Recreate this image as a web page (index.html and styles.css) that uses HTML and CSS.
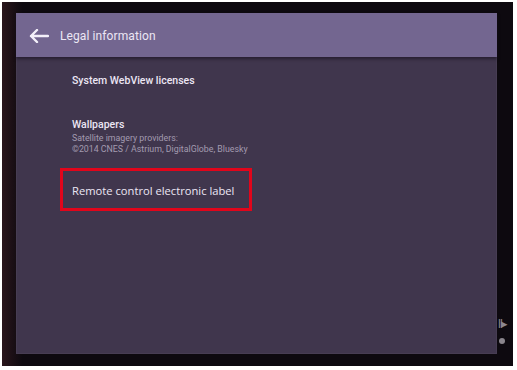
FILE: index.html
```html
<!DOCTYPE html>
<html>
<head>
    <meta charset="UTF-8">
    <title>Legal information</title>
    <link rel="stylesheet" href="styles.css">
</head>
<body>
    <div class="bezel">
        <div class="screen">
            <div class="app-bar">
                <svg class="back" width="20" height="14" viewBox="0 0 20 14">
                    <path d="M19 7H2M8 1L2 7l6 6" fill="none" stroke="#f4f0fa" stroke-width="2.4" stroke-linecap="round" stroke-linejoin="round"/>
                </svg>
                <span class="title">Legal information</span>
            </div>

            <ul class="prefs">
                <li class="pref first">
                    <span class="pref-title">System WebView licenses</span>
                </li>
                <li class="pref">
                    <span class="pref-title">Wallpapers</span>
                    <span class="pref-summary">Satellite imagery providers:<br>©2014 CNES / Astrium, DigitalGlobe, Bluesky</span>
                </li>
                <li class="pref highlight">
                    <span class="label">Remote control electronic label</span>
                </li>
            </ul>
        </div>

        <div class="side-keys">
            <span class="key-play">&#8214;&#9656;</span>
            <span class="key-dot"></span>
        </div>
    </div>
</body>
</html>
```

FILE: styles.css
```css
/* Tablet settings screen */
:root {
    --bezel: #0d090f;
    --bar: #736690;
    --screen: #40364d;
    --text: #ece6f4;
    --summary: #a39bb0;
    --mark: #e1051b;
}

* {
    margin: 0;
    padding: 0;
    box-sizing: border-box;
}

body {
    background: #ffffff;
    width: 517px;
    height: 370px;
    overflow: hidden;
    font-family: Roboto, "Liberation Sans", sans-serif;
}

.bezel {
    position: relative;
    margin: 2px 4px 0 2px;
    height: 364px;
    padding: 11px 16px 12px 14px;
    background: linear-gradient(90deg, #2a161c 0%, #0d090f 4%, #0d090f 100%);
}

.screen {
    height: 341px;
    background: var(--screen);
    box-shadow: inset 0 0 0 1px rgba(255, 255, 255, 0.04);
}

.app-bar {
    height: 44px;
    display: flex;
    align-items: center;
    padding-left: 13px;
    padding-top: 1px;
    background: var(--bar);
    box-shadow: 0 2px 3px rgba(20, 14, 28, 0.6);
}

.back {
    display: block;
}

.title {
    margin-left: 11px;
    font-size: 12px;
    color: var(--text);
    letter-spacing: 0.1px;
}

.prefs {
    list-style: none;
    padding-left: 56px;
}

.pref {
    display: flex;
    flex-direction: column;
}

.pref.first {
    padding-top: 17px;
    height: 61px;
}

.pref-title {
    font-size: 10.5px;
    font-weight: 500;
    color: var(--text);
    line-height: 14px;
}

.pref-summary {
    margin-top: 1px;
    font-size: 8.8px;
    line-height: 10.5px;
    color: var(--summary);
}

.highlight {
    margin: 14px 0 0 -12px;
    width: 192px;
    height: 43px;
    border: 3px solid var(--mark);
    justify-content: center;
    padding-left: 9px;
    padding-top: 2px;
}

.label {
    font-family: "Open Sans", sans-serif;
    font-size: 11.2px;
    color: var(--text);
}

.side-keys {
    position: absolute;
    right: 7px;
    top: 314px;
    display: flex;
    flex-direction: column;
    align-items: center;
    gap: 7px;
}

.key-play {
    font-size: 13px;
    color: #8d8890;
    letter-spacing: -2px;
}

.key-dot {
    width: 6px;
    height: 6px;
    border-radius: 50%;
    background: #8a858c;
}
```
